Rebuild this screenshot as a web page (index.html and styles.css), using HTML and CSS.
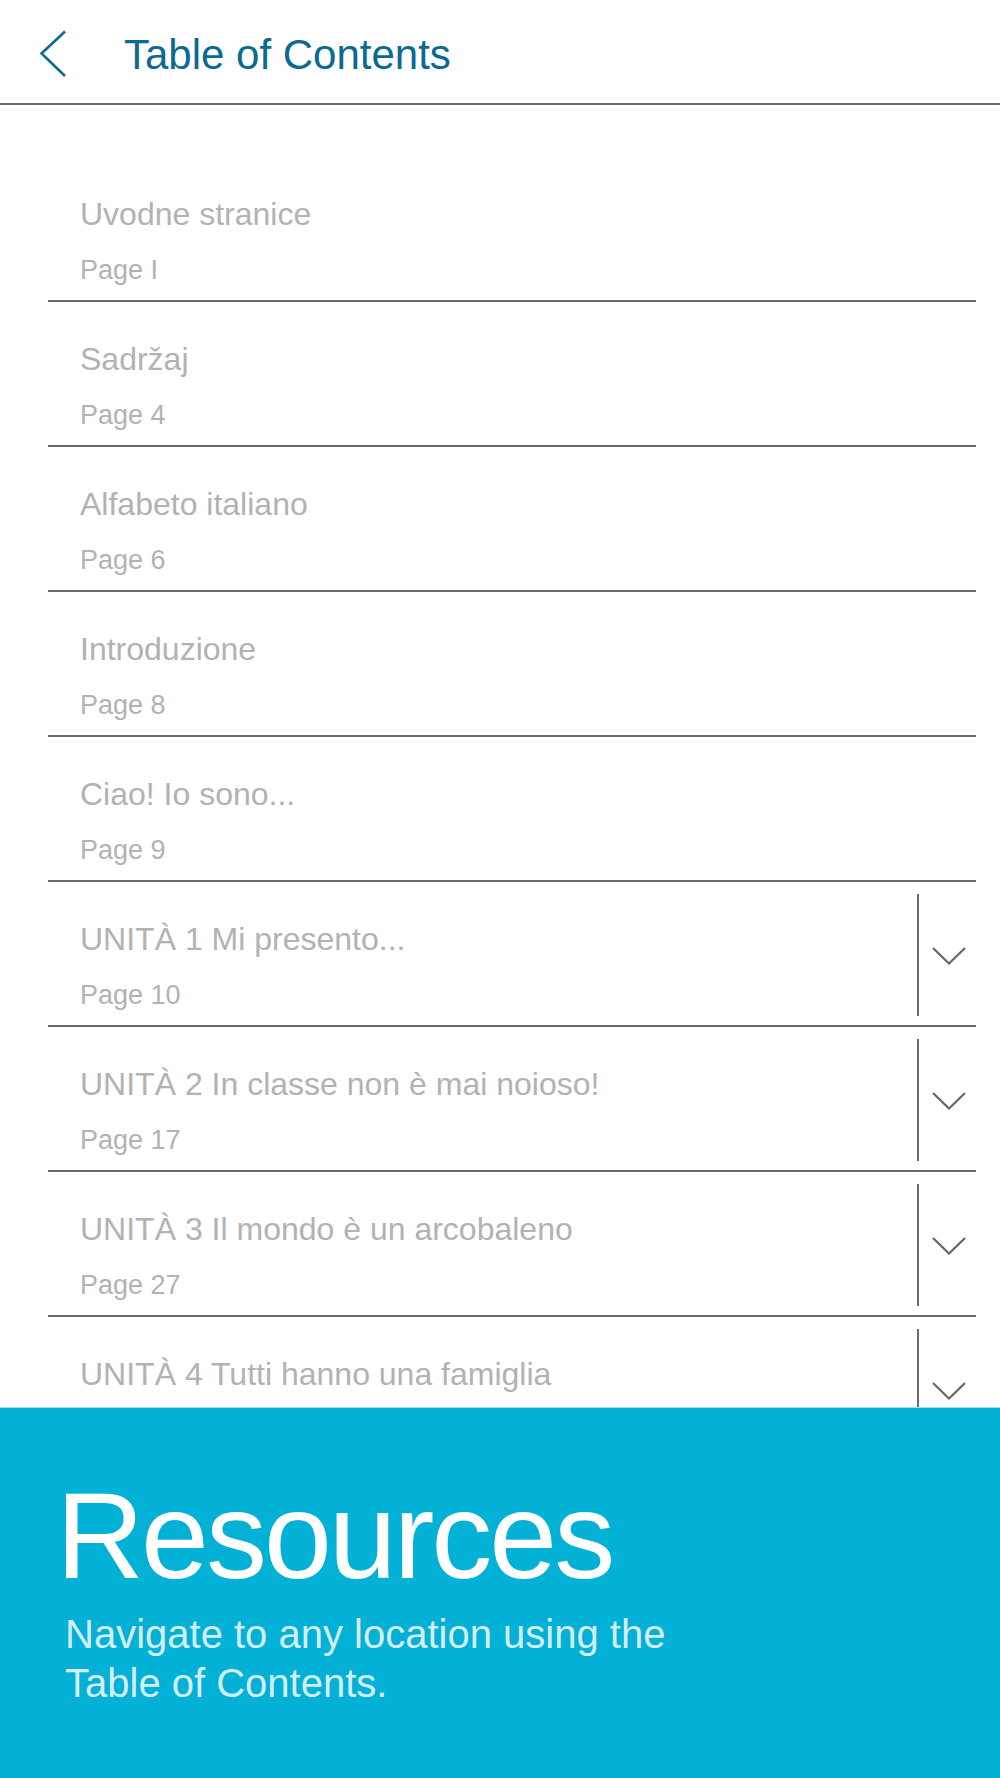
FILE: index.html
```html
<!DOCTYPE html>
<html lang="en">
<head>
  <meta charset="UTF-8">
  <meta name="viewport" content="width=device-width, initial-scale=1.0">
  <title>Table of Contents</title>
  <link rel="stylesheet" href="styles.css">
</head>
<body>
  <header class="top-bar">
    <svg class="back-icon" width="28" height="48" viewBox="0 0 28 48">
      <polyline points="25,1.5 1.5,23.5 25,46" fill="none" stroke="#0d6b92" stroke-width="2.6"/>
    </svg>
    <h1 class="page-title">Table of Contents</h1>
  </header>

  <ul class="toc">
    <li class="toc-item">
      <div class="toc-text">
        <div class="toc-title">Uvodne stranice</div>
        <div class="toc-page">Page I</div>
      </div>
    </li>
    <li class="toc-item">
      <div class="toc-text">
        <div class="toc-title">Sadržaj</div>
        <div class="toc-page">Page 4</div>
      </div>
    </li>
    <li class="toc-item">
      <div class="toc-text">
        <div class="toc-title">Alfabeto italiano</div>
        <div class="toc-page">Page 6</div>
      </div>
    </li>
    <li class="toc-item">
      <div class="toc-text">
        <div class="toc-title">Introduzione</div>
        <div class="toc-page">Page 8</div>
      </div>
    </li>
    <li class="toc-item">
      <div class="toc-text">
        <div class="toc-title">Ciao! Io sono...</div>
        <div class="toc-page">Page 9</div>
      </div>
    </li>
    <li class="toc-item">
      <div class="toc-text">
        <div class="toc-title">UNITÀ 1 Mi presento...</div>
        <div class="toc-page">Page 10</div>
      </div>
      <div class="toggle">
        <svg width="34" height="18" viewBox="0 0 34 18"><polyline points="1,1 17,16.5 33,1" fill="none" stroke="#666" stroke-width="2.2"/></svg>
      </div>
    </li>
    <li class="toc-item">
      <div class="toc-text">
        <div class="toc-title">UNITÀ 2 In classe non è mai noioso!</div>
        <div class="toc-page">Page 17</div>
      </div>
      <div class="toggle">
        <svg width="34" height="18" viewBox="0 0 34 18"><polyline points="1,1 17,16.5 33,1" fill="none" stroke="#666" stroke-width="2.2"/></svg>
      </div>
    </li>
    <li class="toc-item">
      <div class="toc-text">
        <div class="toc-title">UNITÀ 3 Il mondo è un arcobaleno</div>
        <div class="toc-page">Page 27</div>
      </div>
      <div class="toggle">
        <svg width="34" height="18" viewBox="0 0 34 18"><polyline points="1,1 17,16.5 33,1" fill="none" stroke="#666" stroke-width="2.2"/></svg>
      </div>
    </li>
    <li class="toc-item">
      <div class="toc-text">
        <div class="toc-title">UNITÀ 4 Tutti hanno una famiglia</div>
        <div class="toc-page">Page 37</div>
      </div>
      <div class="toggle">
        <svg width="34" height="18" viewBox="0 0 34 18"><polyline points="1,1 17,16.5 33,1" fill="none" stroke="#666" stroke-width="2.2"/></svg>
      </div>
    </li>
  </ul>

  <section class="resources">
    <h2 class="resources-title">Resources</h2>
    <p class="resources-text">Navigate to any location using the<br>Table of Contents.</p>
  </section>
</body>
</html>
```

FILE: styles.css
```css
body {
  margin: 0;
  font-family: "Liberation Sans", Arial, sans-serif;
  background-color: #ffffff;
}
.top-bar {
  display: flex;
  align-items: flex-start;
  height: 105px;
  box-sizing: border-box;
  padding: 30px 0 0 40px;
  border-bottom: 2px solid #6a6a6a;
}
.back-icon {
  display: block;
}
.page-title {
  margin: 1px 0 0 56px;
  font-size: 42px;
  line-height: 48px;
  font-weight: normal;
  color: #0b6a92;
}
.toc {
  list-style: none;
  margin: 0 24px 0 48px;
  padding: 52px 0 0 0;
}
.toc-item {
  display: flex;
  height: 145px;
  box-sizing: border-box;
  border-bottom: 2px solid #6a6a6a;
}
.toc-text {
  flex: 1;
  padding: 37px 0 0 32px;
}
.toc-title {
  font-size: 32px;
  line-height: 40px;
  color: #b2b2b2;
  margin-bottom: 20px;
}
.toc-page {
  font-size: 27px;
  line-height: 32px;
  color: #b2b2b2;
}
.toggle {
  width: 55px;
  margin: 12px 0 9px 0;
  border-left: 2px solid #6a6a6a;
  display: flex;
  justify-content: center;
  align-items: center;
  padding-left: 2px;
}
.toggle svg {
  display: block;
  margin-top: 2px;
}
.resources {
  position: fixed;
  left: 0;
  right: 0;
  bottom: 0;
  height: 371px;
  box-sizing: border-box;
  padding: 67px 0 0 0;
  background-color: #03b0d6;
  border-top: 1px solid #9fdcec;
}
.resources-title {
  margin: 0 0 13px 56px;
  font-size: 122px;
  line-height: 122px;
  font-weight: normal;
  letter-spacing: -3px;
  color: #ffffff;
}
.resources-text {
  margin: 0 0 0 65px;
  font-size: 40px;
  line-height: 49px;
  color: #d3eef6;
}
```
